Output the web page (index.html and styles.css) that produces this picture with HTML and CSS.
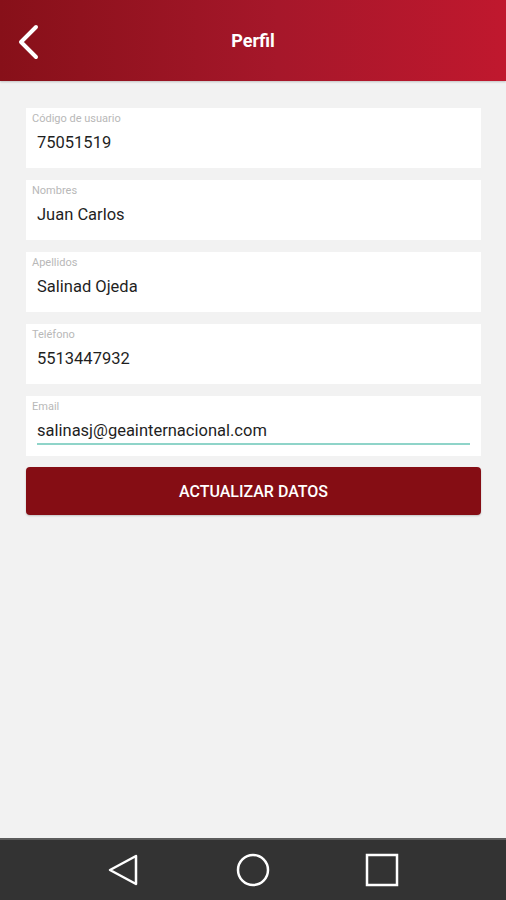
FILE: index.html
```html
<!DOCTYPE html>
<html lang="es">
<head>
    <meta charset="UTF-8">
    <title>Perfil</title>
    <link rel="stylesheet" href="styles.css">
</head>
<body>
<div class="screen">
    <header class="topbar">
        <a class="back" href="#">
            <svg width="24" height="36" viewBox="0 0 24 36">
                <path d="M20 3 L5 18 L20 33" fill="none" stroke="#fff" stroke-width="4" stroke-linecap="round" stroke-linejoin="round"/>
            </svg>
        </a>
        <h1 class="title">Perfil</h1>
    </header>

    <main class="content">
        <div class="field">
            <label>Código de usuario</label>
            <div class="value">75051519</div>
        </div>
        <div class="field">
            <label>Nombres</label>
            <div class="value">Juan Carlos</div>
        </div>
        <div class="field">
            <label>Apellidos</label>
            <div class="value">Salinad Ojeda</div>
        </div>
        <div class="field">
            <label>Teléfono</label>
            <div class="value">5513447932</div>
        </div>
        <div class="field active">
            <label>Email</label>
            <div class="value">salinasj@geainternacional.com</div>
        </div>
        <button class="submit">ACTUALIZAR DATOS</button>
    </main>

    <nav class="navbar">
        <svg width="34" height="34" viewBox="0 0 34 34">
            <path d="M29 3 L3 17 L29 31 Z" fill="none" stroke="#fff" stroke-width="2.5" stroke-linejoin="round"/>
        </svg>
        <svg width="34" height="34" viewBox="0 0 34 34">
            <circle cx="17" cy="17" r="15" fill="none" stroke="#fff" stroke-width="2.5"/>
        </svg>
        <svg width="34" height="34" viewBox="0 0 34 34">
            <rect x="2" y="2" width="30" height="30" fill="none" stroke="#fff" stroke-width="2.5"/>
        </svg>
    </nav>
</div>
</body>
</html>
```

FILE: styles.css
```css
body {
    margin: 0;
    font-family: Roboto, "Liberation Sans", sans-serif;
    background: #f2f2f2;
}
.screen {
    display: flex;
    flex-direction: column;
    height: 900px;
}
.topbar {
    height: 81px;
    display: flex;
    align-items: center;
    justify-content: center;
    position: relative;
    background: linear-gradient(to right, #871019, #a6172a 55%, #c0182e);
    box-shadow: 0 1px 2px rgba(0, 0, 0, 0.2);
}
.back {
    position: absolute;
    left: 16px;
    top: 24px;
    display: block;
}
.title {
    margin: 0;
    color: white;
    font-size: 18px;
    font-weight: bold;
}
.content {
    flex: 1;
    padding: 27px 25px 0 26px;
    display: flex;
    flex-direction: column;
    gap: 12px;
}
.field {
    background: white;
    height: 60px;
    box-sizing: border-box;
    padding: 4px 11px 0 6px;
}
.field label {
    display: block;
    font-size: 11px;
    color: #b8b8b8;
    line-height: 13px;
}
.value {
    margin-left: 5px;
    margin-top: 8px;
    font-size: 16.5px;
    color: #1f1f1f;
    line-height: 20px;
    padding-bottom: 2px;
}
.field.active .value {
    border-bottom: 2px solid #8fd4c9;
}
.submit {
    margin-top: -1px;
    height: 48px;
    background: #850d14;
    color: white;
    border: none;
    border-radius: 4px;
    font-family: Roboto, "Liberation Sans", sans-serif;
    font-size: 16px;
    font-weight: 500;
    cursor: pointer;
    box-shadow: 0 1px 2px rgba(0, 0, 0, 0.2);
}
.navbar {
    height: 60px;
    background: #333333;
    border-top: 2px solid #5c5c5c;
    display: flex;
    align-items: center;
    justify-content: center;
    gap: 95px;
}
```
